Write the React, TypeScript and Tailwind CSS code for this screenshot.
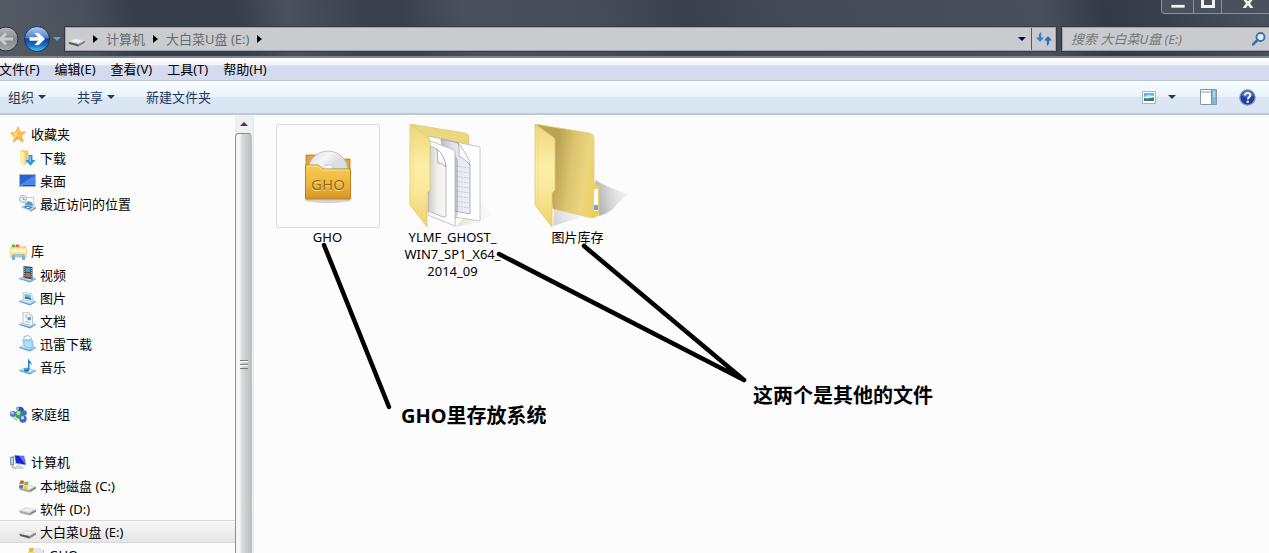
import type { ReactNode } from 'react';

type IconName =
  | 'star'
  | 'download'
  | 'desktop'
  | 'recent'
  | 'library'
  | 'video'
  | 'picture'
  | 'document'
  | 'thunder'
  | 'music'
  | 'homegroup'
  | 'computer'
  | 'systemDrive'
  | 'drive'
  | 'usbDrive'
  | 'gho';

interface TreeItem {
  label: string;
  icon: IconName;
  level?: number;
  selected?: boolean;
}

const tree: TreeItem[][] = [
  [
    { label: '收藏夹', icon: 'star' },
    { label: '下载', icon: 'download', level: 1 },
    { label: '桌面', icon: 'desktop', level: 1 },
    { label: '最近访问的位置', icon: 'recent', level: 1 },
  ],
  [
    { label: '库', icon: 'library' },
    { label: '视频', icon: 'video', level: 1 },
    { label: '图片', icon: 'picture', level: 1 },
    { label: '文档', icon: 'document', level: 1 },
    { label: '迅雷下载', icon: 'thunder', level: 1 },
    { label: '音乐', icon: 'music', level: 1 },
  ],
  [{ label: '家庭组', icon: 'homegroup' }],
  [
    { label: '计算机', icon: 'computer' },
    { label: '本地磁盘 (C:)', icon: 'systemDrive', level: 1 },
    { label: '软件 (D:)', icon: 'drive', level: 1 },
    { label: '大白菜U盘 (E:)', icon: 'usbDrive', level: 1, selected: true },
    { label: 'GHO', icon: 'gho', level: 2 },
  ],
];

const menus = ['文件(F)', '编辑(E)', '查看(V)', '工具(T)', '帮助(H)'];

// blue tray that every library icon stands on
const tray = (
  <>
    <path d="M0 12 6 9.5 17 12 11 16z" fill="#a9d3ec" />
    <path d="M0 12 11 15 17 12v1l-6 3.5L0 13z" fill="#5ea3cc" />
    <path d="M3 12 6.5 10.5 14 12 10.5 14z" fill="#d9eef9" />
  </>
);

const driveBody = (
  <>
    <path d="M0 10.5 7 7l10 2.5L10.500 13z" fill="#dcdcdc" />
    <path d="M0 10.5 10.500 13v2.500L1 13z" fill="#a9a9a9" />
    <path d="M10.500 13 17 9.500v2.200l-6.500 3.800z" fill="#868686" />
    <path d="M3 10.300 7.300 8.200 13.500 9.700 10 11.700z" fill="#f2f2f2" />
  </>
);

const icons: Record<IconName, ReactNode> = {
  star: (
    <>
      <path d="M8 0 10.300 5.400l6.200.3-4.700 4 2 6.800-6-3.300-4.800 3.600.9-6.300L0 6.700l5.500-1z" fill="#f3a83a" />
      <path d="M8 1.500 9.800 6.200l5 .3L10.800 9.700l1.500 5-4.500-2.700z" fill="#fcbf52" />
      <path d="m8 1.500-.8 8.300L4 14.500l.8-5.200L2 7.300l4.200-.8z" fill="#ffe08c" />
    </>
  ),
  download: (
    <>
      <path d="M1 1 9.500 1.500v12l-4.500 2.500-4-2.500z" fill="#ecce78" />
      <path d="m1 1 4.500 3V16.500L1 13.500z" fill="#fbeeb0" />
      <path d="M9.500 6h4v5H16.500l-5 5.700-5-5.700h3z" fill="#2d94dc" />
      <path d="M10.500 7h1.200v6.500l-1.200-1z" fill="#8ccaf5" />
    </>
  ),
  desktop: (
    <>
      <path d="M0 2h17v13H0z" fill="#a9b6c8" />
      <path d="M1 3h15v10H1z" fill="#2b62d3" />
      <path d="M1 13 16 3v10z" fill="#4f86e8" />
      <path d="M1 13h15v1H1z" fill="#37506f" />
      <path d="M2 13h1.500v1H2z" fill="#7ad27a" />
    </>
  ),
  recent: (
    <>
      <path d="M5 2h10l1 9-10 1z" fill="#c5d1d8" />
      <path d="M6.500 3h7.500l.8 6.500-7.500.5z" fill="#fff" />
      <path d="m6 9 3-3 4.500 1.500.5 3-7 1z" fill="#4d9ecb" />
      <path d="M1 12 7 9.500 17 12 11 16z" fill="#c6d0d6" />
      <path d="m4 12 4-1.500L14 12l-4 2.500z" fill="#3a83b8" />
      <path d="m7 12.500 2-.8 2 .5-2 1z" fill="#e5f3fb" />
      <path d="m11 16 6-4v1.500L11 17z" fill="#7c868d" />
      <circle cx="4" cy="4" r="3.500" fill="#e8edf0" stroke="#a5b4bd" />
      <path d="M4 2v2.300h2" fill="none" stroke="#8ba0ad" />
    </>
  ),
  library: (
    <>
      <path d="M1 3h3l1-1h4l1 1h6v12H1z" fill="#e4c767" />
      <path d="M2 1.500h3V4H2z" fill="#64b84e" />
      <path d="M6 1.500h3V4H6z" fill="#e46b48" />
      <path d="M10 2h5v2h-5z" fill="#f7eec4" />
      <path d="M0 4.500h17V15H0z" fill="#f5df90" />
      <path d="M1 5.500h15v4H1z" fill="#fff3c2" />
      <path d="M2 17v-4.500l2-1.500h9l2 1.500V17h-3v-3.500H5V17z" fill="#72b4da" />
      <path d="M3.500 12.500 5 11.500h7l1.500 1z" fill="#c6e6f6" />
    </>
  ),
  video: (
    <>
      {tray}
      <path d="M4.500 0 13.500 1v12.500l-9-1.500z" fill="#3a4650" />
      <path d="m6.500 1.500 5 .6v4.200l-5-.6z" fill="#4a9ac4" />
      <path d="m6.500 6.700 5 .6v4.200l-5-.6z" fill="#b8724a" />
      <path d="M5.500 1v10.800M12.500 2v10.800" stroke="#c9d2d8" strokeDasharray="1 1" strokeWidth=".8" />
    </>
  ),
  picture: (
    <>
      {tray}
      <path d="m4 3.500 8.500 1L14 12.300 4.500 11z" fill="#fff" stroke="#9fc0d4" strokeWidth=".8" />
      <path d="m5.300 5 6.200.8 1 5-6.700-1z" fill="#78bbdf" />
      <path d="m5.600 8.500 2-1 4.700 2.300v1l-6.600-1z" fill="#397d80" />
    </>
  ),
  document: (
    <>
      {tray}
      <path d="M4 0 10.500.8 13.500 4v9.500L4 11.500z" fill="#f6f8fc" stroke="#a9b9c4" strokeWidth=".8" />
      <path d="M10.500.8V4h3z" fill="#c8d6de" />
      <path d="M6 3h3M6 5h2M6 9.500l5 .8" stroke="#a9b8c4" />
      <path d="M8.500 5H12v3.200H8.500z" fill="#5f9fca" />
    </>
  ),
  thunder: (
    <>
      {tray}
      <path d="M5 1.500 9.500.5 12.500 3v8L5 10z" fill="#f5fbff" stroke="#8fa9b9" strokeWidth=".8" />
      <path d="m3 4.500 9-.5 2.500 2v8.500l-9-2z" fill="#8ecbee" />
      <path d="m5.500 6 7 .5v6l-6.500-1.200z" fill="#b5ddf4" />
    </>
  ),
  music: (
    <>
      {tray}
      <path d="M9 0c.5 3 4.500 3.500 3.500 7.500C12 5.500 10.800 5 10.500 5v6.500c0 3.200-5.700 3-5.700.3C4.800 9.800 7.500 9.300 9 10z" fill="#1a7fc9" />
      <path d="M6 11.500c.5-1 2-1 2.500-.8" stroke="#8bd0f7" fill="none" />
    </>
  ),
  homegroup: (
    <>
      <circle cx="3" cy="8" r="3" fill="#4d79c8" />
      <circle cx="2.500" cy="7" r="1.300" fill="#c3d8f6" />
      <path d="M6 2.500C7 0 14 0 14 4.500c0 2-2 3-3 3z" fill="#2a4fae" />
      <circle cx="7.500" cy="2.500" r="1.700" fill="#8eb0ea" />
      <circle cx="9" cy="8.500" r="4.200" fill="#45a34d" />
      <circle cx="8.300" cy="7" r="2" fill="#b4e5ac" />
      <circle cx="14" cy="7" r="2.800" fill="#3f70c5" />
      <circle cx="13" cy="13" r="3.700" fill="#3d68c2" />
      <circle cx="12.500" cy="11.800" r="1.800" fill="#c0d5f6" />
      <path d="M3 11 7 14.500" stroke="#a6c4a9" strokeWidth="1.500" />
    </>
  ),
  computer: (
    <>
      <path d="M0 3 4 2v10l-4-1z" fill="#8b95a3" />
      <path d="m1 4 2-.5v7L1 10z" fill="#c4cbd6" />
      <path d="M4 .8 14.500 1.500 16.500 11.500 5 10z" fill="#b9c3d6" />
      <path d="M5 1.500 13.700 2.300 15.500 10.500 6 9z" fill="#1427c4" />
      <path d="m9 1.900 4.700.4L15.500 10.500z" fill="#5f7af0" />
      <path d="m7 11 5 1 3 2.500-6 .8-4-2z" fill="#cfd3d8" />
      <path d="m2 12 5 2-1 1.500-5-2z" fill="#b8bec4" />
    </>
  ),
  systemDrive: (
    <>
      {driveBody}
      <path d="M1 4c1.500-1 2.800-1 4 0L4.500 7.500C3.300 6.500 2 6.500.5 7.500z" fill="#e35b2b" />
      <path d="M5.700 4.300c1.300.8 2.500.8 4 0L9 7.800c-1.300.8-2.500.6-3.800-.1z" fill="#7cb83b" />
      <path d="M.3 8.300c1.400-.9 2.700-.8 4 0L3.800 11.500C2.500 10.800 1.300 10.800 0 11.500z" fill="#3c80cc" />
      <path d="M5 8.700c1.200.7 2.500.7 3.800 0L8.300 12c-1.300.7-2.500.5-3.800-.1z" fill="#f6c331" />
    </>
  ),
  drive: (
    <>
      {driveBody}
      <path d="M11.500 13.300h2v1h-2z" fill="#76c65b" />
    </>
  ),
  usbDrive: (
    <>
      {driveBody}
      <path d="M.5 11 10.500 13.300v2.200L1.500 13z" fill="#5a5a5a" />
    </>
  ),
  gho: (
    <>
      <path d="M1 2h5l1 2h9v13H1z" fill="#e8b94a" />
      <circle cx="10" cy="7" r="5.500" fill="#e4e7e7" />
      <path d="M0 6h6l2 2h8v9H0z" fill="#f6d873" />
    </>
  ),
};

function TreeIcon({ name }: { name: IconName }) {
  return (
    <svg viewBox="0 0 17 17" className="size-[17px] shrink-0" aria-hidden="true">
      {icons[name]}
    </svg>
  );
}

function Triangle({ className = '' }: { className?: string }) {
  return (
    <svg viewBox="0 0 8 4" className={`h-1 w-2 shrink-0 ${className}`} aria-hidden="true">
      <path d="M0 0h8L4 4z" fill="currentColor" />
    </svg>
  );
}

function Chevron() {
  return (
    <svg viewBox="0 0 5 8" className="h-2 w-[5px] shrink-0" aria-hidden="true">
      <path d="M0 0 5 4 0 8z" fill="#000" />
    </svg>
  );
}

function WindowButtons() {
  return (
    <div className="-mr-1.5 flex h-[14px] rounded-b border border-t-0 border-[#8b9097] bg-[#4b515c]">
      <button aria-label="最小化" className="flex w-8 justify-center border-r border-[#8b9097]">
        <svg viewBox="0 0 14 8" width="14" height="8">
          <path d="M0 4.500h14v3.500H0z" fill="#f3f3f3" stroke="#343a45" strokeWidth=".6" />
        </svg>
      </button>
      <button aria-label="最大化" className="flex w-7 justify-center border-r border-[#8b9097]">
        <svg viewBox="0 0 14 8" width="14" height="8">
          <path d="M0 0h14v8H0zM3 0v5h8V0z" fill="#f3f3f3" fillRule="evenodd" />
        </svg>
      </button>
      <button aria-label="关闭" className="flex w-[52px] justify-center">
        <svg viewBox="0 0 12 8" width="12" height="8">
          <path d="M1.500 0h3.200L6 1.500 7.300 0h3.200L8 3.500 11.500 8H8L6 5.300 4 8H.5L4 3.500z" fill="#f3f3f3" />
        </svg>
      </button>
    </div>
  );
}

function AddressRow() {
  return (
    <div className="flex h-[26px] items-center">
      <button aria-label="后退" className="-ml-1.5 size-[26px] shrink-0">
        <svg viewBox="0 0 26 26">
          <defs>
            <linearGradient id="back" x1="0" y1="0" x2="0" y2="1">
              <stop offset="0" stopColor="#b9bbbe" />
              <stop offset=".5" stopColor="#858789" />
              <stop offset="1" stopColor="#a6a8aa" />
            </linearGradient>
          </defs>
          <circle cx="12" cy="13" r="12" fill="url(#back)" stroke="#2c313a" />
          <path d="M12 7.500 6.500 13l5.500 5.500M7 13h12" fill="none" stroke="#c9cacb" strokeWidth="3" />
        </svg>
      </button>
      <button aria-label="前进" className="ml-1 size-[26px] shrink-0">
        <svg viewBox="0 0 26 26">
          <defs>
            <linearGradient id="fwd" x1="0" y1="0" x2="0" y2="1">
              <stop offset="0" stopColor="#b9d0ee" />
              <stop offset=".45" stopColor="#4a80d0" />
              <stop offset=".5" stopColor="#0f429f" />
              <stop offset=".75" stopColor="#1a6ccb" />
              <stop offset="1" stopColor="#45d0fa" />
            </linearGradient>
          </defs>
          <circle cx="13" cy="13" r="12.500" fill="url(#fwd)" stroke="#26324a" />
          <path d="M5.500 11.300H14L10.500 7h4.200l6.300 6-6.300 6h-4.200l3.500-4.300H5.500z" fill="#fff" />
        </svg>
      </button>
      <button aria-label="历史记录" className="ml-[3px] flex w-2 shrink-0">
        <Triangle className="text-[#3eaade]" />
      </button>
      <div className="ml-1 flex h-6 min-w-0 flex-1 border border-[#a3a7ad] bg-[#cacbcf] ring-1 ring-[#333943]">
        <div className="flex min-w-0 flex-1 items-center gap-2 pl-0.5 text-[#626b70]">
          <TreeIcon name="usbDrive" />
          <Chevron />
          <a href="#computer">计算机</a>
          <Chevron />
          <a href="#e">大白菜U盘 (E:)</a>
          <Chevron />
        </div>
        <button aria-label="以前的位置" className="flex w-[18px] items-center justify-center">
          <Triangle className="text-[#00006a]" />
        </button>
        <button aria-label="刷新" className="flex w-6 items-center justify-center border-l border-[#555a62]">
          <svg viewBox="0 0 16 14" width="16" height="14">
            <path d="M5.500 0C3 1 2.500 3 2.800 5.500H0L4 10l4-4.500H5.500C5 3.500 5 2 5.500 0z" fill="#3385d3" />
            <path d="M10.500 14c2.500-1 3-3 2.700-5.500H16L12 4 8 8.500h2.500c.5 2 .5 3.500 0 5.500z" fill="#2a6fc0" />
          </svg>
        </button>
      </div>
      <div className="-mr-1 ml-1.5 flex h-6 w-[211px] shrink-0 items-center border border-[#a3a7ad] bg-[#cacbcf] pr-1.5 pl-2 ring-1 ring-[#333943]">
        <input
          type="text"
          aria-label="搜索"
          placeholder="搜索 大白菜U盘 (E:)"
          className="min-w-0 flex-1 bg-transparent italic outline-none placeholder:text-[#74777b]"
        />
        <svg viewBox="0 0 14 14" width="14" height="14" aria-hidden="true">
          <circle cx="8.500" cy="5" r="4" fill="#e4edf7" stroke="#3a6fb5" strokeWidth="1.800" />
          <path d="M5.500 8 1 12.500" stroke="#3a6fb5" strokeWidth="2.500" strokeLinecap="round" />
        </svg>
      </div>
    </div>
  );
}

function Toolbar() {
  return (
    <div className="flex h-[34px] shrink-0 items-center border-b-2 border-[#bccad9] bg-linear-to-b from-[#f8fcff] from-0% via-[#ebf3fc] via-48% to-[#dbe6f4] to-52% pr-[13px] pl-2 text-[#1e395b]">
      <button className="flex items-center gap-1">
        组织
        <Triangle />
      </button>
      <button className="ml-[31px] flex items-center gap-1">
        共享
        <Triangle />
      </button>
      <button className="ml-[31px]">新建文件夹</button>
      <div className="ml-auto flex items-center">
        <button aria-label="更改视图">
          <svg viewBox="0 0 14 13" width="14" height="13" className="block">
            <path d="M.5.5h13v12H.5z" fill="#fff" stroke="#a3b5c8" />
            <path d="M2 2h10v4H2z" fill="#68b3e8" />
            <path d="M2 6c3-2 5-2 10-1v3H2z" fill="#d9effb" />
            <path d="M2 7c3 1 6 0 10-.5V10H2z" fill="#3a7c74" />
          </svg>
        </button>
        <button aria-label="更多选项" className="ml-3">
          <Triangle className="block" />
        </button>
        <button aria-label="显示预览窗格" className="ml-6">
          <svg viewBox="0 0 17 16" width="17" height="16" className="block">
            <path d="M.5.5h16v15H.5z" fill="#fff" stroke="#8298ad" />
            <path d="M1 3h10" stroke="#8ca7bf" />
            <path d="M11 1h5v14h-5z" fill="#7fbdd3" />
            <path d="M11.500 1v14" stroke="#5d96b0" />
            <path d="M13 2h2v6h-2z" fill="#a6d8e8" />
          </svg>
        </button>
        <button aria-label="获取帮助" className="ml-[22px]">
          <svg viewBox="0 0 17 17" width="17" height="17" className="block">
            <circle cx="8.500" cy="8.500" r="7.700" fill="#1c3fa8" stroke="#8d9cb8" strokeWidth="1.200" />
            <path d="M2.500 6.500a6.300 6.300 0 0 1 12 0c-3 2-9 2-12 0z" fill="#4a6fce" />
            <path d="M6 6.500c0-3.500 5.300-3.300 5.300-.3 0 2-2.500 2-2.500 4" fill="none" stroke="#fff" strokeWidth="1.900" />
            <circle cx="8.700" cy="12.700" r="1.200" fill="#fff" />
          </svg>
        </button>
      </div>
    </div>
  );
}

const levelClass = ['h-6 pl-2.5', 'h-[23px] pl-[19px]', 'h-[23px] pl-7'];

function Sidebar() {
  return (
    <nav className="flex w-[235px] shrink-0 flex-col gap-6 overflow-hidden pt-[7px]">
      {tree.map((group) => (
        <ul key={group[0].label}>
          {group.map((item) => (
            <li key={item.label}>
              <a
                href={`#${item.label}`}
                className={`flex items-center gap-1 ${levelClass[item.level ?? 0]} ${
                  item.selected ? 'border-y border-[#d9d9d9] bg-linear-to-b from-[#f8f8f8] to-[#e5e5e5]' : ''
                }`}
              >
                <TreeIcon name={item.icon} />
                {item.label}
              </a>
            </li>
          ))}
        </ul>
      ))}
    </nav>
  );
}

function Scrollbar() {
  return (
    <div className="flex w-[19px] shrink-0 flex-col border-r-2 border-[#e3edf6] bg-[#f0f0f0]">
      <button aria-label="向上滚动" className="flex h-[18px] shrink-0 items-center justify-center">
        <Triangle className="rotate-180 text-[#404040]" />
      </button>
      <div className="flex flex-1 items-start justify-center rounded-t-sm border border-b-0 border-[#8e8e8e] border-r-[#c4c4c4] bg-linear-to-r from-[#f5f5f5] from-25% via-[#d9dadc] via-40% to-[#bcbdc0] pt-[226px]">
        <svg viewBox="0 0 8 9" width="8" height="9" aria-hidden="true">
          <path d="M0 1.500h8M0 5.500h8" stroke="#fff" />
          <path d="M0 .5h8M0 4.500h8M0 8.500h8" stroke="#7c7c7c" />
        </svg>
      </div>
    </div>
  );
}

function GhoIcon() {
  return (
    <svg viewBox="0 0 102 102" className="size-[102px]" aria-hidden="true">
      <defs>
        <linearGradient id="ghoFront" x1="0" y1="0" x2="0" y2="1">
          <stop offset="0" stopColor="#f8cc54" />
          <stop offset=".6" stopColor="#ecb43b" />
          <stop offset="1" stopColor="#d69224" />
        </linearGradient>
        <linearGradient id="disc" x1="0" y1="0" x2="1" y2="1">
          <stop offset="0" stopColor="#d3d3d7" />
          <stop offset=".3" stopColor="#f6f6f8" />
          <stop offset=".5" stopColor="#dcdce2" />
          <stop offset=".75" stopColor="#c4ebe1" />
          <stop offset="1" stopColor="#e8c9dd" />
        </linearGradient>
      </defs>
      <ellipse cx="51" cy="75" rx="23" ry="3" fill="#d2d2d2" />
      <path d="M29 30h10l3 4h31v30H29z" fill="#e0a63a" stroke="#b67a20" strokeWidth=".8" />
      <circle cx="51" cy="46" r="20" fill="url(#disc)" stroke="#b5b6b9" strokeWidth=".8" />
      <circle cx="51" cy="46" r="6" fill="#fff" stroke="#c5c5c8" />
      <path d="M28.500 40h13l4 4h28v30h-45z" fill="url(#ghoFront)" stroke="#bb8020" />
      <path d="M29.500 41h12l4 4h27" fill="none" stroke="#ffe395" />
      <text x="51" y="66" textAnchor="middle" fontSize="15" fill="#ffe08a">
        GHO
      </text>
      <text x="51" y="65" textAnchor="middle" fontSize="15" fill="#9a6818">
        GHO
      </text>
    </svg>
  );
}

function FolderIcon({ withPapers }: { withPapers?: boolean }) {
  const id = withPapers ? 'papers' : 'plain';
  return (
    <svg viewBox="0 0 104 104" className="size-[104px]" aria-hidden="true">
      <defs>
        <linearGradient id={`${id}Flap`} x1="0" y1="0" x2="0" y2="1">
          <stop offset="0" stopColor="#eed77c" />
          <stop offset=".4" stopColor="#fbeea4" />
          <stop offset=".6" stopColor="#fbeb9f" />
          <stop offset="1" stopColor="#f0d268" />
        </linearGradient>
        <linearGradient id={`${id}Back`} x1="0" y1=".4" x2="1" y2=".6">
          <stop offset=".3" stopColor="#bda253" />
          <stop offset=".55" stopColor="#dac46f" />
          <stop offset=".8" stopColor="#ecd67e" />
          <stop offset="1" stopColor="#ecce55" />
        </linearGradient>
        <linearGradient id={`${id}Shadow`} x1="0" y1=".2" x2="1" y2="0">
          <stop offset="0" stopColor="#9a9a9a" stopOpacity=".75" />
          <stop offset="1" stopColor="#d5d5d5" stopOpacity=".1" />
        </linearGradient>
        <linearGradient id={`${id}Page`} x1="0" y1="0" x2="1" y2="0">
          <stop offset="0" stopColor="#cbc8c0" />
          <stop offset=".5" stopColor="#f0efed" />
          <stop offset="1" stopColor="#f8f8f8" />
        </linearGradient>
        <linearGradient id={`${id}Sheet`} x1="0" y1="0" x2="1" y2="0">
          <stop offset="0" stopColor="#b9bdc6" />
          <stop offset=".4" stopColor="#dfe4ee" />
          <stop offset="1" stopColor="#edf0f6" />
        </linearGradient>
      </defs>
      {withPapers ? (
        <>
          <path d="m79 78 13 12-14 8-24 5z" fill={`url(#${id}Shadow)`} opacity=".3" />
          <path d="m9 0 55 9q4 1 4 5v12L28 20z" fill="#ecd67e" stroke="#d8bf63" strokeWidth=".6" />
          <path d="m27 12 52 11v74l-26-4z" fill="#fff" stroke="#b9b9b9" strokeWidth=".8" />
          <path d="M40 15 57 19 69 41v49l-15-3z" fill={`url(#${id}Sheet)`} stroke="#9a9ea8" strokeWidth=".8" />
          <path
            d="m54 42 14 2m-14 3 14 2m-14 3 14 2m-14 3 14 2m-14 3 14 2m-14 3 14 2m-14 3 14 2m-14 3 14 2m-14 3 14 2"
            stroke="#bcc5da"
            strokeWidth=".8"
            strokeDasharray="2 1"
          />
          <path d="M57 19q2 5 1 13 5 2 11 9-1-9-12-22z" fill="#fff" stroke="#999" strokeWidth=".7" />
          <path d="m53 28 4 8v54l-4 8z" fill="#777" opacity=".35" />
          <path d="m29 17 22 8q3 1 3 4v73L27 91z" fill="#fff" stroke="#b5b5b5" strokeWidth=".8" />
          <path d="m29 22 7 3 9 18v48q0 3-3 2L27 87z" fill={`url(#${id}Page)`} stroke="#aaa" strokeWidth=".8" />
          <path d="m36 25 1 14q5 0 8 4-1-11-9-18z" fill="#fff" stroke="#888" strokeWidth=".7" />
        </>
      ) : (
        <>
          <path d="M69 56q14 8 34 14l-12 10q-4 8-18 12z" fill={`url(#${id}Shadow)`} />
          <path d="m28 84 32 8-33 10z" fill={`url(#${id}Shadow)`} opacity=".5" />
          <path
            d="m9 0 54 9q5 1 5 5v45l5 4v28l-6 3-40-9z"
            fill={`url(#${id}Back)`}
            stroke="#e3cd7b"
            strokeWidth=".8"
          />
          <path d="M68 65h4v22h-4z" fill="#fff" />
          <path d="M68 81h4v5h-4z" fill="#6aa5ee" />
        </>
      )}
      <path
        d="m9 0 18 13q2 2 2 4v49l-3 3v34L9 81z"
        fill={`url(#${id}Flap)`}
        stroke="#e0c873"
        strokeWidth=".8"
      />
      <path d="M12 4v80" stroke="#eed683" strokeWidth=".6" />
    </svg>
  );
}

function FileTile({ children, label, framed }: { children: ReactNode; label: string[]; framed?: boolean }) {
  return (
    <button className="flex w-[105px] flex-col items-center leading-[17px]">
      <span className={`mb-px block size-[104px] ${framed ? 'rounded-xs border border-[#dadada]' : ''}`}>{children}</span>
      {label.map((line) => (
        <span key={line}>{line}</span>
      ))}
    </button>
  );
}

export default function App() {
  return (
    <div className="flex h-screen flex-col overflow-hidden bg-[#fcfcfc] font-['Noto_Sans','Noto_Sans_CJK_SC',sans-serif] text-[13px] leading-5 text-black">
      <header className="flex h-[58px] shrink-0 flex-col border-b-2 border-[#7f848b] bg-[linear-gradient(80deg,#555b65_0%,#4b515c_7%,#363e4a_11%,#363e4a_19%,#4a515c_23%,#3a424e_29%,#39414d_32%,#4a515c_37%,#464d58_47%,#39414c_54%,#434a56_62%,#474e59_76%,#49505b_82%,#323a45_87%,#39414c_92%,#4b525d_100%)]">
        <div className="flex justify-end">
          <WindowButtons />
        </div>
        <div className="mt-3">
          <AddressRow />
        </div>
      </header>

      <div className="flex h-[23px] shrink-0 items-center overflow-hidden border-b border-[#b9c3d6] bg-linear-to-b from-white from-0% via-[#f0f3fa] via-30% to-[#d5dbee] to-36%">
        <div className="-ml-px flex gap-[15px]">
          {menus.map((menu) => (
            <button key={menu}>{menu}</button>
          ))}
        </div>
      </div>

      <Toolbar />

      <div className="flex min-h-0 flex-1">
        <Sidebar />
        <Scrollbar />
        <main className="relative min-w-0 flex-1 overflow-hidden">
          <div className="flex items-start gap-5 pt-[9px] pl-[21px]">
            <FileTile label={['GHO']} framed>
              <GhoIcon />
            </FileTile>
            <FileTile label={['YLMF_GHOST_', 'WIN7_SP1_X64_', '2014_09']}>
              <FolderIcon withPapers />
            </FileTile>
            <FileTile label={['图片库存']}>
              <FolderIcon />
            </FileTile>
          </div>

          {/* Hand-drawn notes over the file list */}
          <svg
            viewBox="0 0 520 300"
            className="pointer-events-none absolute top-0 left-0 h-[300px] w-[520px]"
            aria-hidden="true"
          >
            <path
              d="M70 130 135 292M245 139 490 265M330 131 490 265"
              fill="none"
              stroke="#000"
              strokeWidth="4.500"
              strokeLinecap="round"
            />
          </svg>
          <p className="absolute top-[287px] left-[147px] text-xl leading-7 font-bold">GHO里存放系统</p>
          <p className="absolute top-[267px] left-[499px] text-xl leading-7 font-bold">这两个是其他的文件</p>
        </main>
      </div>
    </div>
  );
}
